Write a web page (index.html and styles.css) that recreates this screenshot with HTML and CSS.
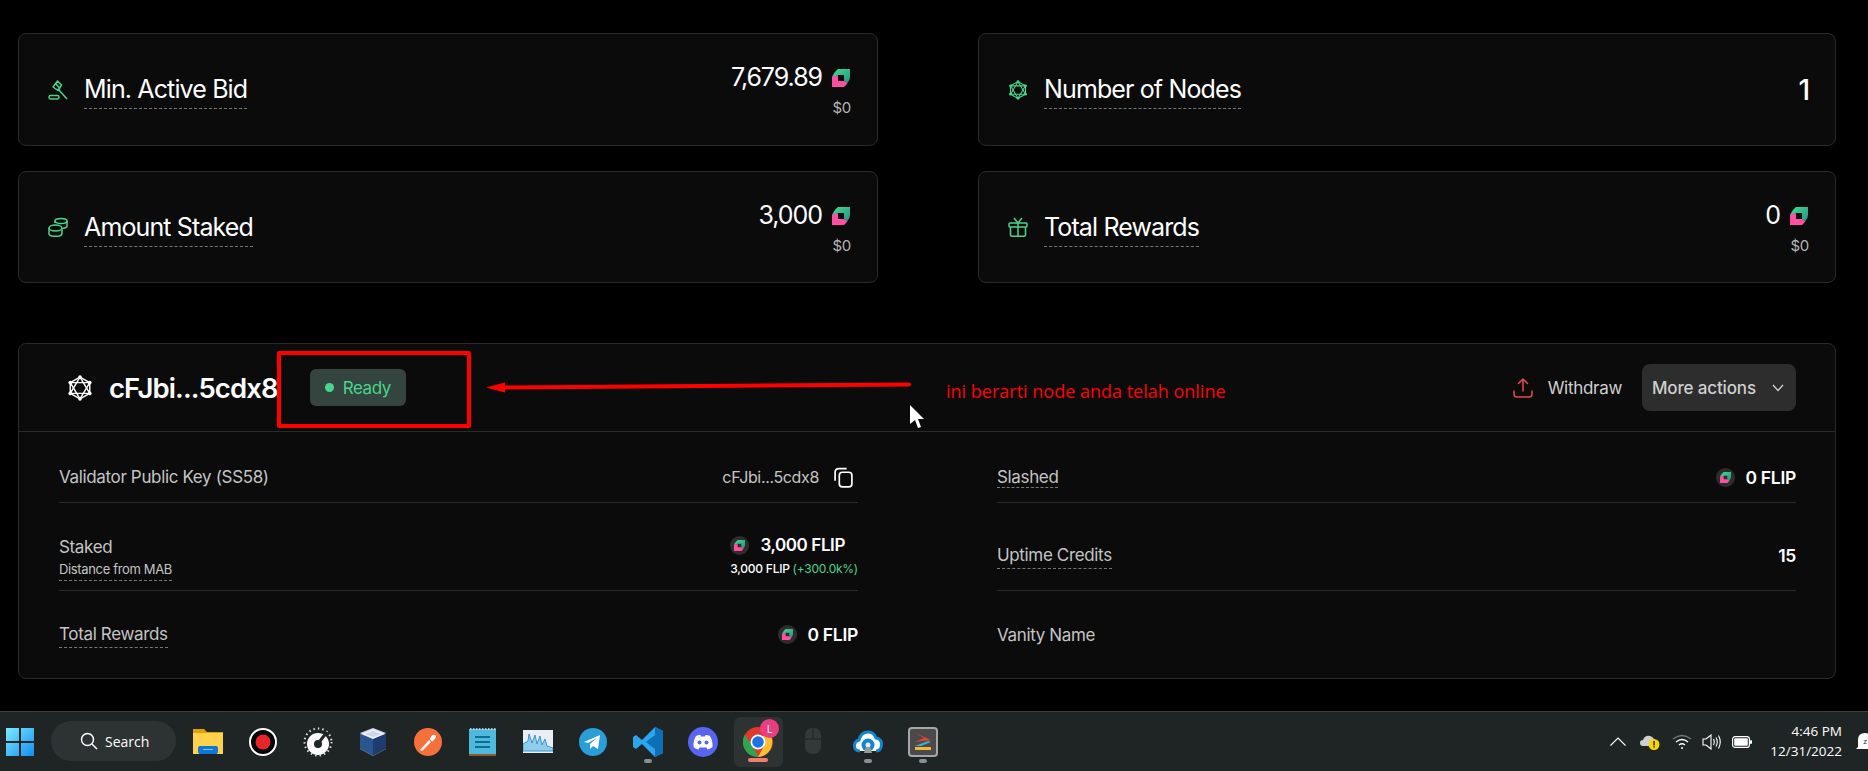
FILE: index.html
```html
<!DOCTYPE html>
<html lang="en">
<head>
<meta charset="utf-8">
<title>Validator node</title>
<link rel="stylesheet" href="styles.css">
</head>
<body>
<svg class="defs" width="0" height="0" aria-hidden="true">
  <defs>
    <linearGradient id="flipGreen" x1="0" y1="0" x2="1" y2="1">
      <stop offset="0" stop-color="#3fe08f"/>
      <stop offset="1" stop-color="#2a8f86"/>
    </linearGradient>
    <symbol id="flip" viewBox="0 0 18 18">
      <path fill="url(#flipGreen)" d="M6 0H18V8Q18 11 15.500 14L12 12V6H6L0 9Q1 4 6 0Z"/>
      <path fill="#ff4fa3" d="M0 8L6 6V12H12L15.500 14Q14 16.500 12 18H0Z"/>
    </symbol>
    <symbol id="node" viewBox="1 0 22 24">
      <g fill="none" stroke="currentColor" stroke-width="1.300" stroke-linejoin="round">
        <path d="M12 2L21 7V17L12 22L3 17V7Z"/>
        <path d="M12 2L21 17H3Z"/>
        <path d="M12 22L3 7H21Z"/>
      </g>
      <g fill="currentColor">
        <circle cx="12" cy="2" r="1.700"/><circle cx="21" cy="7" r="1.700"/><circle cx="21" cy="17" r="1.700"/>
        <circle cx="12" cy="22" r="1.700"/><circle cx="3" cy="17" r="1.700"/><circle cx="3" cy="7" r="1.700"/>
      </g>
    </symbol>
  </defs>
</svg>

<main class="page">
  <section class="stats">
    <article class="card">
      <div class="card-label">
        <svg class="card-icon" viewBox="0 0 20 20" fill="none" stroke="currentColor" stroke-width="1.500" stroke-linejoin="round"><path d="M9.500 1L13.500 5L10 10.500L5 7Z"/><path d="M7.500 3.500L12 8.500"/><path d="M10.500 9.500L19 19"/><rect x="1" y="15.500" width="10" height="3.500" rx="1.700"/></svg>
        <span class="dotted">Min. Active Bid</span>
      </div>
      <div class="card-value">
        <div class="amount">7,679.89 <svg class="flip"><use href="#flip"/></svg></div>
        <div class="usd">$0</div>
      </div>
    </article>
    <article class="card">
      <div class="card-label">
        <svg class="card-icon"><use href="#node"/></svg>
        <span class="dotted">Number of Nodes</span>
      </div>
      <div class="card-value">
        <div class="amount amount-lg">1</div>
      </div>
    </article>
    <article class="card">
      <div class="card-label">
        <svg class="card-icon" viewBox="0 0 20 20" fill="none" stroke="currentColor" stroke-width="1.500"><ellipse cx="13" cy="4" rx="6" ry="2.500"/><path d="M7 4V6M19 4V9Q19 11 15 11.300"/><ellipse cx="7.500" cy="11" rx="6.500" ry="3"/><path d="M1 11V16.500Q1 19.300 7.500 19.300T14 16.500V11"/></svg>
        <span class="dotted">Amount Staked</span>
      </div>
      <div class="card-value">
        <div class="amount">3,000 <svg class="flip"><use href="#flip"/></svg></div>
        <div class="usd">$0</div>
      </div>
    </article>
    <article class="card">
      <div class="card-label">
        <svg class="card-icon" viewBox="0 0 20 20" fill="none" stroke="currentColor" stroke-width="1.500" stroke-linejoin="round"><rect x="1" y="6" width="18" height="4" rx="1"/><path d="M2.500 10V18Q2.500 19.200 4 19.200H16Q17.500 19.200 17.500 18V10M10 6V19M10 6L6 1M10 6L14 1"/></svg>
        <span class="dotted">Total Rewards</span>
      </div>
      <div class="card-value">
        <div class="amount">0 <svg class="flip"><use href="#flip"/></svg></div>
        <div class="usd">$0</div>
      </div>
    </article>
  </section>

  <section class="panel">
    <header class="panel-head">
      <div class="panel-title">
        <svg class="title-icon"><use href="#node"/></svg>
        <h2>cFJbi...5cdx8</h2>
        <span class="badge"><i class="badge-dot"></i>Ready</span>
      </div>
      <div class="panel-actions">
        <button class="withdraw" type="button">
          <svg viewBox="0 0 20 20" width="20" height="20" fill="none" stroke="currentColor" stroke-width="1.500" stroke-linecap="round" stroke-linejoin="round"><path d="M10 13V1M5.500 5.500L10 1L14.500 5.500"/><path d="M1 13V16Q1 19 4 19H16Q19 19 19 16V13"/></svg>
          <span>Withdraw</span>
        </button>
        <button class="more" type="button">
          <span>More actions</span>
          <svg viewBox="0 0 12 8" width="12" height="8" fill="none" stroke="currentColor" stroke-width="1.300"><path d="M1 1L6 6.500L11 1"/></svg>
        </button>
      </div>
    </header>
    <div class="details">
      <div class="col">
        <div class="row row-first">
          <span class="row-label">Validator Public Key (SS58)</span>
          <span class="key">cFJbi...5cdx8
            <svg viewBox="0 0 20 20" width="21" height="21" fill="none" stroke="#fff" stroke-width="1.600"><rect x="6" y="5" width="12" height="14" rx="3"/><path d="M2 13V5Q2 1.500 5.500 1.500H13"/></svg>
          </span>
        </div>
        <div class="row row-mid row-stake">
          <div class="row-label">
            <div class="label-main">Staked</div>
            <div class="dotted label-sub">Distance from MAB</div>
          </div>
          <div class="stake">
            <div class="flip-value stake-main"><span class="coin"><svg><use href="#flip"/></svg></span>3,000 FLIP</div>
            <div class="stake-sub">3,000 FLIP <span class="gain">(+300.0k%)</span></div>
          </div>
        </div>
        <div class="row row-last">
          <span class="row-label dotted">Total Rewards</span>
          <div class="flip-value"><span class="coin"><svg><use href="#flip"/></svg></span>0 FLIP</div>
        </div>
      </div>
      <div class="col">
        <div class="row row-first">
          <span class="row-label dotted label-tight">Slashed</span>
          <div class="flip-value"><span class="coin"><svg><use href="#flip"/></svg></span>0 FLIP</div>
        </div>
        <div class="row row-mid row-low">
          <span class="row-label dotted">Uptime Credits</span>
          <div class="flip-value low-value">15</div>
        </div>
        <div class="row row-last">
          <span class="row-label">Vanity Name</span>
        </div>
      </div>
    </div>
  </section>

  <div class="redbox"></div>
  <div class="arrow"></div>
  <div class="note">ini berarti node anda telah online</div>
  <svg class="cursor" viewBox="0 0 14 23" width="14" height="23"><path fill="#fff" d="M0 0L14 14H8L11 22L8 23L5 15L0 19Z"/></svg>
</main>

<footer class="taskbar">
  <div class="start">
    <svg viewBox="0 0 30 30" width="30" height="30"><defs><linearGradient id="win" x1="0" y1="0" x2="1" y2="1"><stop offset="0" stop-color="#7fe9ff"/><stop offset="1" stop-color="#0f8ff0"/></linearGradient></defs><path fill="url(#win)" d="M1 1H14V14H1ZM16 1H29V14H16ZM1 16H14V29H1ZM16 16H29V29H16Z"/></svg>
  </div>
  <div class="search">
    <svg viewBox="0 0 18 18" width="18" height="18" fill="none" stroke="#fff" stroke-width="1.500"><circle cx="7.500" cy="7.500" r="6"/><path d="M12 12L17 17"/></svg>
    <span>Search</span>
  </div>
  <div class="apps">
    <div class="app"><svg viewBox="0 0 30 30"><path fill="#e0a100" d="M0 2H11L14 5H30V12H0Z"/><path fill="#ffd24d" d="M0 6H30V27H0Z"/><rect fill="#0f78d4" x="5" y="19" width="20" height="8" rx="2"/><rect fill="#7cc4f5" x="10" y="22" width="10" height="1"/></svg></div>
    <div class="app"><svg viewBox="0 0 30 30"><circle cx="15" cy="15" r="13" fill="#000" stroke="#fff" stroke-width="2"/><circle cx="15" cy="15" r="7.500" fill="#e8262a"/></svg></div>
    <div class="app"><svg viewBox="0 0 30 30"><circle cx="15" cy="15" r="13.500" fill="none" stroke="#ddd" stroke-width="2" stroke-dasharray="1.500 3"/><circle cx="15" cy="17" r="11" fill="#fff"/><circle cx="15" cy="17" r="4" fill="#1f2525"/><path d="M17 14L24 5" stroke="#1f2525" stroke-width="3"/></svg></div>
    <div class="app"><svg viewBox="0 0 30 30"><path fill="#cfd6e6" d="M15 1L28 6V22L15 29L2 22V6Z"/><path fill="#1e3d6f" d="M15 12L28 6V22L15 29Z"/><path fill="#2a5690" d="M2 6L15 12V29L2 22Z"/><path fill="none" stroke="#eef" stroke-width="1.500" d="M15 3L25 7L15 11L5 7Z"/></svg></div>
    <div class="app"><svg viewBox="0 0 30 30"><circle cx="15" cy="15" r="14" fill="#f5703a"/><path d="M7 23L16 13L18 15L9 24ZM17 12Q19 7 22 8T20 14Q18 15 17 12Z" fill="#fff"/></svg></div>
    <div class="app"><svg viewBox="0 0 30 30"><rect x="1" y="2" width="27" height="27" fill="#4fb8dd"/><rect x="1" y="27" width="27" height="2" fill="#8a5a2c"/><path stroke="#0d6e94" stroke-width="2" d="M7 10H22M7 15H22M7 20H22"/><path stroke="#d6f1fa" stroke-width="1.500" stroke-dasharray="1.500 1.500" d="M2 2H28"/></svg></div>
    <div class="app"><svg viewBox="0 0 30 30"><rect y="3" width="30" height="23" fill="#e8eef3"/><path fill="#8fcdee" stroke="#3a97d0" d="M0 24V17L5 14L6 7L9 16L12 8L14 17L17 9L19 18L22 12L24 19L30 21V24Z"/></svg></div>
    <div class="app"><svg viewBox="0 0 30 30"><circle cx="15" cy="15" r="14" fill="#2a9ed8"/><path fill="#fff" d="M6 15L22 8L20 22L15 19L12 22L12 17L19 11L10 16Z"/></svg></div>
    <div class="app active-dot"><svg viewBox="0 0 30 30"><path fill="#2aa5ee" d="M22 0L30 4V26L22 30L9 17L3 22L0 20V10L3 8L9 13Z"/><path fill="#0d6fb8" d="M22 0L30 4V26L22 30ZM22 8L13 15L22 22Z"/></svg></div>
    <div class="app"><svg viewBox="0 0 30 30"><circle cx="15" cy="15" r="15" fill="#5865f2"/><path fill="#fff" d="M8 9Q11 7.500 12.500 8L13 9.500H17L17.500 8Q19 7.500 22 9Q25 14 24.500 20Q22 22 19.500 22.500L18.500 20.500H11.500L10.500 22.500Q8 22 5.500 20Q5 14 8 9Z"/><circle cx="11.500" cy="15.500" r="2" fill="#5865f2"/><circle cx="18.500" cy="15.500" r="2" fill="#5865f2"/></svg></div>
    <div class="app app-chrome">
      <svg viewBox="0 0 30 30"><circle cx="15" cy="15" r="15" fill="#e0392c"/><path fill="#2da44e" d="M15 30A15 15 0 0 1 2 7.500L9 19L16 30Z"/><path fill="#fbc02d" d="M15 30L21 19L17 9H28A15 15 0 0 1 15 30Z"/><circle cx="15" cy="15" r="7.500" fill="#fff"/><circle cx="15" cy="15" r="5.800" fill="#1a73e8"/></svg>
      <span class="chrome-badge">L</span>
    </div>
    <div class="app app-dim"><svg viewBox="0 0 30 30"><rect x="7" y="1" width="16" height="26" rx="7" fill="#333838"/><path stroke="#1f2525" d="M7 12H23M15 1V12"/></svg></div>
    <div class="app active-dot"><svg viewBox="0 0 30 30"><path fill="#fff" stroke="#0f86d0" stroke-width="3" d="M7 24Q1 24 1.500 18Q2 14 6 13Q8 5 15 5Q21 5 23 11Q29 12 28.500 18Q28 24 23 24"/><circle cx="15" cy="18" r="6.500" fill="#0f86d0"/><circle cx="15" cy="18" r="2.500" fill="#e8e8e8"/><path fill="#999" d="M13 20H17L19 26H11Z"/></svg></div>
    <div class="app active-dot"><svg viewBox="0 0 30 30"><rect x="1" y="1" width="28" height="28" rx="3" fill="#4a4a4a" stroke="#a6a6a6" stroke-width="2"/><path fill="#e8432e" d="M7 6L23 13L7 15L16 11Z"/><path fill="#2fb5e0" d="M7 19L20 14L23 15L13 19Z"/><path fill="#f2b632" d="M7 20H23V23H7Z"/></svg></div>
  </div>
  <div class="tray">
    <svg viewBox="0 0 16 9" width="16" height="9" fill="none" stroke="#fff" stroke-width="1.100"><path d="M0.500 8.500L8 1L15.500 8.500"/></svg>
    <svg class="tray-cloud" viewBox="0 0 20 16" width="20" height="16"><path fill="#cfcfcf" d="M3 12Q0 12 0 9T3 6Q5 1 10 2Q14 3 15 8H15L12 12Z"/><circle cx="14" cy="10.500" r="5.500" fill="#f5d60a"/><rect x="13.400" y="7" width="1.300" height="4.500" fill="#111"/><rect x="13.400" y="12.300" width="1.300" height="1.300" fill="#111"/></svg>
    <svg class="tray-wifi" viewBox="0 0 20 16" width="20" height="16" fill="none" stroke="#fff" stroke-width="1.300"><path stroke="#777" d="M1 5Q10 -2 19 5"/><path d="M4 8Q10 3 16 8"/><path d="M7 11Q10 8.500 13 11"/><circle cx="10" cy="14" r="1" fill="#fff" stroke="none"/></svg>
    <svg class="tray-sound" viewBox="0 0 20 16" width="20" height="16" fill="none" stroke="#fff" stroke-width="1.100"><path d="M1 5H4L9 1V15L4 11H1Z"/><path d="M11.500 5Q13 8 11.500 11M14 3.500Q16.500 8 14 12.500M16.500 1.500Q20 8 16.500 14.500"/></svg>
    <svg class="tray-battery" viewBox="0 0 20 12" width="20" height="12"><rect x="0.600" y="0.600" width="16.800" height="10.800" rx="2.500" fill="none" stroke="#fff" stroke-width="1.200"/><rect x="2.200" y="2.200" width="13.600" height="7.600" rx="1" fill="#fff"/><rect x="18" y="4" width="2" height="4" rx="1" fill="#fff"/></svg>
    <div class="clock"><div>4:46 PM</div><div>12/31/2022</div></div>
    <svg class="tray-bell" viewBox="0 0 18 20" width="18" height="20"><path fill="#fff" d="M2 15V8Q2 1 9 1T16 8V15L18 17H0Z"/><text x="9" y="12" font-size="8" text-anchor="middle" fill="#1f2525" font-family="Open Sans">z</text></svg>
  </div>
</footer>
</body>
</html>
```

FILE: styles.css
```css
* { box-sizing: border-box; }
html, body { margin: 0; padding: 0; height: 771px; overflow: hidden; }
body { background: #000; color: #fff; font-family: "Inter", "Liberation Sans", sans-serif; display: flex; flex-direction: column; }
.defs { position: absolute; }

.page { position: relative; height: 711px; padding: 33px 32px 0 18px; }

.stats { display: grid; grid-template-columns: 860px 858px; grid-template-rows: 113px 112px; column-gap: 100px; row-gap: 25px; }
.card { background: #0b0b0b; border: 1px solid #2a2a2a; border-radius: 8px; display: flex; justify-content: space-between; align-items: center; padding: 0 26px 0 29px; }
.card-label { display: flex; align-items: center; gap: 16px; color: #46d68c; }
.card-label .dotted { color: #fff; font-size: 25px; line-height: 30px; padding-bottom: 4px; margin-top: 4px; letter-spacing: -0.87px; }
.card-icon { width: 20px; height: 20px; flex: none; }
.dotted { border-bottom: 1px dashed #777; display: inline-block; }
.card-value { text-align: right; }
.amount { display: flex; justify-content: flex-end; align-items: center; gap: 10px; font-size: 25px; line-height: 30px; letter-spacing: -1.05px; }
.amount-lg { font-size: 28px; font-weight: 500; }
.flip { width: 18px; height: 18px; flex: none; margin: 2px 1px 0 0; }
.usd { font-size: 15px; line-height: 18px; color: #b5b5b5; margin-top: 7px; letter-spacing: -0.3px; }

.panel { margin-top: 60px; height: 336px; background: #0b0b0b; border: 1px solid #2a2a2a; border-radius: 8px; }
.panel-head { height: 88px; border-bottom: 1px solid #2a2a2a; display: flex; justify-content: space-between; align-items: center; padding: 0 39px 0 48px; }
.panel-title { display: flex; align-items: center; }
.title-icon { width: 26px; height: 26px; color: #fff; margin-right: 16px; }
.panel-title h2 { margin: 0 32px 0 0; font-size: 27.500px; font-weight: 600; letter-spacing: -0.9px; }
.badge { display: flex; align-items: center; gap: 9px; height: 37px; width: 96px; padding: 0 0 0 15px; background: #34443f; border-radius: 6px; color: #46d68c; font-size: 17px; letter-spacing: -0.45px; }
.badge-dot { width: 9px; height: 9px; border-radius: 50%; background: #46d68c; }
.panel-actions { display: flex; align-items: center; gap: 20px; }
.withdraw, .more { font: inherit; border: 0; display: flex; align-items: center; font-size: 17px; letter-spacing: -0.3px; color: #cfcfcf; }
.withdraw { background: none; padding: 0; gap: 15px; }
.withdraw svg { color: #e5484d; }
.more { height: 47px; width: 154px; padding: 0 12px 0 10px; justify-content: space-between; background: #2d2d2d; border-radius: 8px; font-weight: 500; letter-spacing: -0.15px; }

.details { display: grid; grid-template-columns: 799px 799px; column-gap: 139px; padding: 20px 39px 0 40px; }
.row { display: flex; justify-content: space-between; align-items: center; border-bottom: 1px solid #2a2a2a; }
.row-first { height: 51px; }
.row-mid { height: 88px; }
.row-stake { padding-top: 16px; }
.row-stake .row-label { margin-top: 6px; }
.row-low { align-items: flex-end; padding-bottom: 21px; }
.low-value { margin-bottom: 3px; }
.row-last { height: 87px; border-bottom: 0; }
.row-label { font-size: 17px; line-height: 24px; color: #c4c4c4; letter-spacing: -0.35px; }
.dotted.row-label { padding-bottom: 1px; }
.dotted.label-tight { line-height: 20px; padding-bottom: 0; }
.label-main { line-height: 26px; }
.label-sub { font-size: 13px; line-height: 18px; padding-bottom: 2px; letter-spacing: -0.35px; display: block; width: max-content; }
.key { display: flex; align-items: center; gap: 14px; font-size: 16px; color: #c4c4c4; letter-spacing: -0.35px; padding-right: 4px; }
.flip-value { display: flex; align-items: center; font-size: 17.500px; font-weight: 600; color: #fff; letter-spacing: -0.3px; }
.coin { width: 19px; height: 19px; border-radius: 50%; background: #2d2d2d; margin-right: 11px; display: flex; align-items: center; justify-content: center; }
.coin svg { width: 11px; height: 11px; }
.stake { text-align: right; margin-top: 2px; }
.stake-main { margin-right: 13px; justify-content: flex-end; font-size: 17px; letter-spacing: -0.4px; }
.stake-sub { font-size: 12px; font-weight: 500; color: #fff; margin-top: 6px; letter-spacing: -0.25px; }
.gain { color: #46d68c; font-weight: 400; }

.redbox { position: absolute; left: 277px; top: 351px; width: 194px; height: 77px; border: 4px solid #f00; border-radius: 2px; }
.arrow { position: absolute; left: 500px; top: 384px; width: 411px; height: 4px; background: #f00; transform: rotate(-0.4deg); border-radius: 2px; }
.arrow::before { content: ""; position: absolute; left: -14px; top: -3.500px; border-right: 19px solid #f00; border-top: 5.500px solid transparent; border-bottom: 5.500px solid transparent; }
.note { position: absolute; left: 946px; top: 379px; width: 280px; overflow: hidden; white-space: nowrap; color: #f00; font-family: "Open Sans", sans-serif; font-size: 18px; line-height: 24px; }
.cursor { position: absolute; left: 910px; top: 405px; }

.taskbar { height: 60px; background: #1f2525; border-top: 1px solid #3a3f3f; display: flex; align-items: flex-start; font-family: "Open Sans", sans-serif; position: relative; }
.start { margin: 15px 0 0 5px; width: 30px; height: 30px; }
.search { margin: 9px 0 0 16px; width: 125px; height: 40px; border-radius: 20px; background: #2d3333; display: flex; align-items: center; gap: 7px; padding-left: 29px; font-size: 14px; color: #fff; }
.apps { display: flex; gap: 25px; margin: 15px 0 0 17px; }
.app { position: relative; width: 30px; height: 30px; flex: none; }
.app > svg { width: 30px; height: 30px; display: block; }
.active-dot::after { content: ""; position: absolute; left: 11px; top: 32px; width: 8px; height: 4px; border-radius: 2px; background: #8a8f8f; }
.app-chrome::before { content: ""; position: absolute; left: -9px; top: -10px; width: 49px; height: 50px; background: #2d3333; border-radius: 6px; }
.app-chrome > svg { position: relative; }
.app-chrome::after { content: ""; position: absolute; left: 5px; top: 31px; width: 20px; height: 4px; border-radius: 2px; background: #f47e6c; }
.chrome-badge { position: absolute; left: 17px; top: -8px; width: 19px; height: 19px; border-radius: 50%; background: #e83e80; color: #fff; font-size: 11px; line-height: 19px; text-align: center; }
.tray { margin-left: auto; margin-right: -6px; display: flex; align-items: center; height: 100%; color: #fff; }
.tray > svg { flex: none; }
.tray-cloud { margin-left: 14px; }
.tray-wifi { margin-left: 12.500px; }
.tray-sound { margin-left: 10px; }
.tray-battery { margin-left: 10px; }
.clock { width: 87px; margin: -2px 0 0 3px; text-align: right; font-size: 13.500px; line-height: 20px; }
.tray-bell { margin-left: 14px; }
```
